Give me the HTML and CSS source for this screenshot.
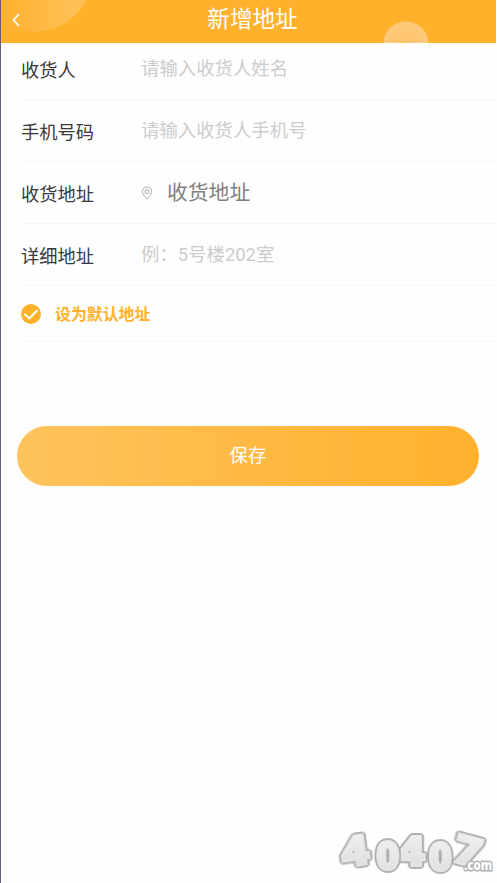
FILE: index.html
```html
<!DOCTYPE html>
<html lang="zh-CN">
<head>
<meta charset="utf-8">
<title>新增地址</title>
<link rel="stylesheet" href="styles.css">
</head>
<body>
<div class="page">
  <header class="header">
    <svg class="back" viewBox="0 0 10 14"><path d="M8 1 2.500 7 8 13"/></svg>
    <h1 class="title">新增地址</h1>
  </header>
  <main>
    <form class="form">
      <div class="row"><span class="label">收货人</span><span class="hint">请输入收货人姓名</span></div>
      <div class="row"><span class="label">手机号码</span><span class="hint">请输入收货人手机号</span></div>
      <div class="row">
        <span class="label">收货地址</span>
        <svg class="pin" viewBox="0 0 12 14"><path d="M6 12.800C3.800 10.500 1.400 8.200 1.400 5.600a4.600 4.600 0 0 1 9.200 0C10.600 8.200 8.200 10.500 6 12.800Z"/><circle cx="6" cy="5.700" r="2"/></svg>
        <span class="region">收货地址</span>
      </div>
      <div class="row"><span class="label">详细地址</span><span class="hint">例：5号楼202室</span></div>
      <div class="row row-default">
        <svg class="check" viewBox="0 0 20 20"><circle cx="10" cy="10" r="10"/><path d="M3.500 10 8.200 14.300 16.500 6.300"/></svg>
        <span class="default-text">设为默认地址</span>
      </div>
    </form>
    <button class="save" type="button">保存</button>
  </main>
  <svg class="mark" viewBox="0 0 170 70">
    <defs>
      <linearGradient id="silver" x1="0" y1="0" x2="0" y2="1">
        <stop offset="0" stop-color="#f4f4f4"/><stop offset="1" stop-color="#dcdcdc"/>
      </linearGradient>
    </defs>
    <g class="mark-digits">
      <text transform="translate(16 54.500) rotate(-8) scale(1.120 1)" font-size="43">4</text>
      <text transform="translate(70 52.500) scale(1.120 1)" font-size="43">4</text>
      <text transform="translate(123 48) rotate(15) scale(1.150 .95)" font-size="42">7</text>
      <text transform="translate(49 57) scale(.98 .97)" font-size="41">0</text>
      <text transform="translate(101.500 58) scale(.98 .97)" font-size="41">0</text>
    </g>
    <text class="mark-suffix" x="137" y="57" textLength="28" lengthAdjust="spacingAndGlyphs">.com</text>
  </svg>
</div>
</body>
</html>
```
FILE: styles.css
```css
* { box-sizing: border-box; }
body {
  margin: 0;
  background: #fefefe;
  font-family: Roboto, "Noto Sans CJK SC", sans-serif;
}
.page {
  position: relative;
  height: 883px;
  overflow: hidden;
  border-left: 1px solid #626079;
}
.header {
  display: flex;
  align-items: center;
  height: 42.600px;
  padding: 0 10px 3px;
  margin-right: 1px;
  background:
    radial-gradient(circle 23px at 405px 44px, #ffc368 0, #ffca7c 22px, transparent 23px),
    linear-gradient(90deg, #ffb12c, transparent 70px),
    radial-gradient(circle 58px at 34px -26px, #ffbf55 0, #ffbf55 57px, transparent 58px),
    #ffb12c;
}
.back { width: 10px; height: 14px; }
.back path { fill: none; stroke: #fff; stroke-width: 1.8; }
.title {
  flex: 1;
  margin: 0 2px 0 0;
  padding-top: 1px;
  color: #fff;
  font-size: 22.6px;
  font-weight: 400;
  line-height: 36px;
  text-align: center;
}
.form { padding-left: 20px; margin-right: 1px; }
.row {
  display: flex;
  align-items: center;
  height: 62px;
  border-bottom: 1px solid #f6f6f6;
}
.row:first-child { height: 57.400px; padding-bottom: 4px; }
.label { width: 120px; padding-top: 5px; color: #3a3a3a; font-size: 18.3px; line-height: 28px; }
.hint { padding-top: 1px; color: #ccc; font-size: 18.4px; line-height: 28px; }
.pin { width: 12px; height: 14px; margin-top: 1px; }
.pin path, .pin circle { fill: none; stroke: #999; stroke-width: .8; }
.region { margin-left: 14px; padding-top: 2px; color: #808080; font-size: 20.8px; line-height: 30px; }
.row-default { height: 56px; padding-top: 1px; }
.check { width: 20px; height: 20px; }
.check circle { fill: #ffb12c; }
.check path { fill: none; stroke: #fff; stroke-width: 2; }
.default-text { margin-left: 14px; color: #ffb12c; font-size: 15.9px; font-weight: 700; }
.save {
  display: block;
  width: 462px;
  height: 60px;
  margin: 84px 0 0 16px;
  padding: 0 0 3px;
  border: 0;
  border-radius: 30px;
  background: linear-gradient(90deg, #ffc35c, #ffb12c);
  color: #fff;
  font: 18.4px "Noto Sans CJK SC", sans-serif;
}
.mark { position: absolute; right: 0; bottom: 0; width: 170px; height: 70px; }
.mark text {
  font-family: "Open Sans", sans-serif;
  font-weight: 800;
  paint-order: stroke;
  stroke-linejoin: miter;
}
.mark-digits text {
  fill: url(#silver);
  stroke: #e8e8e8;
  stroke-width: 2px;
  filter: drop-shadow(1px 1px 0 #b1b1b1) drop-shadow(-1px -1px 0 #b1b1b1) drop-shadow(1px -1px 0 #b1b1b1) drop-shadow(-1px 1px 0 #b1b1b1);
}
.mark .mark-suffix { fill: #fff; stroke: #b1b1b1; stroke-width: 3px; font-size: 14px; stroke-linejoin: round; }
```
